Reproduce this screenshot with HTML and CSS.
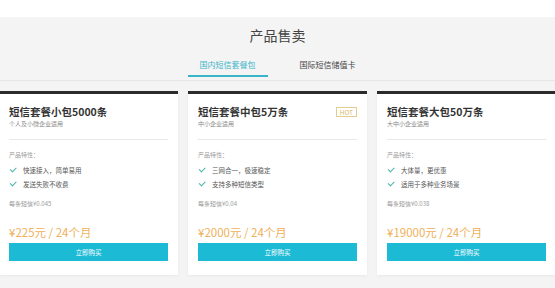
FILE: index.html
```html
<!DOCTYPE html>
<html lang="zh-CN">
<head>
    <meta charset="UTF-8">
    <meta name="viewport" content="width=device-width, initial-scale=1.0">
    <title>产品售卖</title>
    <link rel="stylesheet" href="styles.css">
</head>
<body>
    <div class="section">
        <h1 class="section-title">产品售卖</h1>
        <div class="tabs">
            <div class="tab active">国内短信套餐包</div>
            <div class="tab">国际短信储值卡</div>
        </div>
        <div class="cards">
            <div class="card">
                <div class="card-head">
                    <h2 class="card-title">短信套餐小包5000条</h2>
                </div>
                <p class="card-sub">个人及小微企业适用</p>
                <div class="divider"></div>
                <p class="feat-label">产品特性：</p>
                <ul class="feats">
                    <li><span class="check"></span>快速接入，简单易用</li>
                    <li><span class="check"></span>发送失败不收费</li>
                </ul>
                <p class="unit">每条短信¥0.045</p>
                <p class="price">¥225元 / 24个月</p>
                <button class="buy">立即购买</button>
            </div>
            <div class="card">
                <div class="card-head">
                    <h2 class="card-title">短信套餐中包5万条</h2>
                    <span class="hot">HOT</span>
                </div>
                <p class="card-sub">中小企业适用</p>
                <div class="divider"></div>
                <p class="feat-label">产品特性：</p>
                <ul class="feats">
                    <li><span class="check"></span>三网合一，极速稳定</li>
                    <li><span class="check"></span>支持多种短信类型</li>
                </ul>
                <p class="unit">每条短信¥0.04</p>
                <p class="price">¥2000元 / 24个月</p>
                <button class="buy">立即购买</button>
            </div>
            <div class="card">
                <div class="card-head">
                    <h2 class="card-title">短信套餐大包50万条</h2>
                </div>
                <p class="card-sub">大中小企业适用</p>
                <div class="divider"></div>
                <p class="feat-label">产品特性：</p>
                <ul class="feats">
                    <li><span class="check"></span>大体量，更优惠</li>
                    <li><span class="check"></span>适用于多种业务场景</li>
                </ul>
                <p class="unit">每条短信¥0.038</p>
                <p class="price">¥19000元 / 24个月</p>
                <button class="buy">立即购买</button>
            </div>
        </div>
    </div>
</body>
</html>
```

FILE: styles.css
```css
body {
    margin: 0;
    padding: 0;
    background-color: #fff;
    font-family: "Noto Sans CJK SC", "Noto Sans", sans-serif;
    color: #333;
    overflow: hidden;
}
.section {
    margin-top: 17px;
    background-color: #f4f4f4;
    height: 271px;
}
.section-title {
    margin: 0;
    padding-top: 8px;
    font-size: 14px;
    line-height: 20px;
    font-weight: normal;
    text-align: center;
    color: #444;
}
.tabs {
    display: flex;
    justify-content: center;
    gap: 20px;
    margin-top: 14px;
    border-bottom: 1px solid #e6e6e6;
    padding-bottom: 3px;
}
.tab {
    padding: 0 12px 4px;
    font-size: 8px;
    line-height: 12px;
    color: #444;
    border-bottom: 2px solid transparent;
}
.tab.active {
    color: #3bb4c8;
    border-bottom-color: #3bb4c8;
}
.cards {
    display: flex;
    gap: 10px;
    margin-left: -1px;
    margin-top: 10px;
}
.card {
    width: 179px;
    flex-shrink: 0;
    box-sizing: border-box;
    background-color: #fff;
    border-top: 3px solid #2b2b2b;
    padding: 11px 10px 14px;
    box-shadow: 0 1px 3px rgba(0, 0, 0, 0.05);
}
.card-head {
    display: flex;
    justify-content: space-between;
    align-items: flex-start;
}
.card-title {
    margin: 0;
    font-size: 10.5px;
    line-height: 14px;
    font-weight: bold;
    color: #333;
}
.hot {
    margin-top: 2px;
    padding: 0 3px;
    font-size: 6.5px;
    line-height: 8px;
    color: #d9b860;
    border: 1px solid #e2cd8c;
}
.card-sub {
    margin: 0;
    font-size: 6px;
    line-height: 10px;
    color: #888;
}
.divider {
    margin-top: 10px;
    height: 1px;
    background-color: #e8e8e8;
}
.feat-label {
    margin: 9px 0 0;
    font-size: 6px;
    line-height: 12px;
    color: #999;
}
.feats {
    list-style: none;
    margin: 2px 0 0;
    padding: 0;
}
.feats li {
    display: flex;
    align-items: center;
    font-size: 6.5px;
    line-height: 14px;
    color: #555;
}
.check {
    width: 5px;
    height: 2.5px;
    border-left: 1.3px solid #49b3a8;
    border-bottom: 1.3px solid #49b3a8;
    transform: rotate(-45deg);
    margin: 0 7px 2px 1px;
}
.unit {
    margin: 7px 0 0;
    font-size: 6px;
    line-height: 12px;
    color: #999;
}
.price {
    margin: 14px 0 0;
    font-size: 11.5px;
    line-height: 16px;
    color: #efb05a;
}
.buy {
    display: block;
    width: 100%;
    height: 18px;
    margin-top: 3px;
    border: none;
    padding: 0;
    background-color: #1cbad5;
    color: #fff;
    font-family: inherit;
    font-size: 6.5px;
    cursor: pointer;
}
```
